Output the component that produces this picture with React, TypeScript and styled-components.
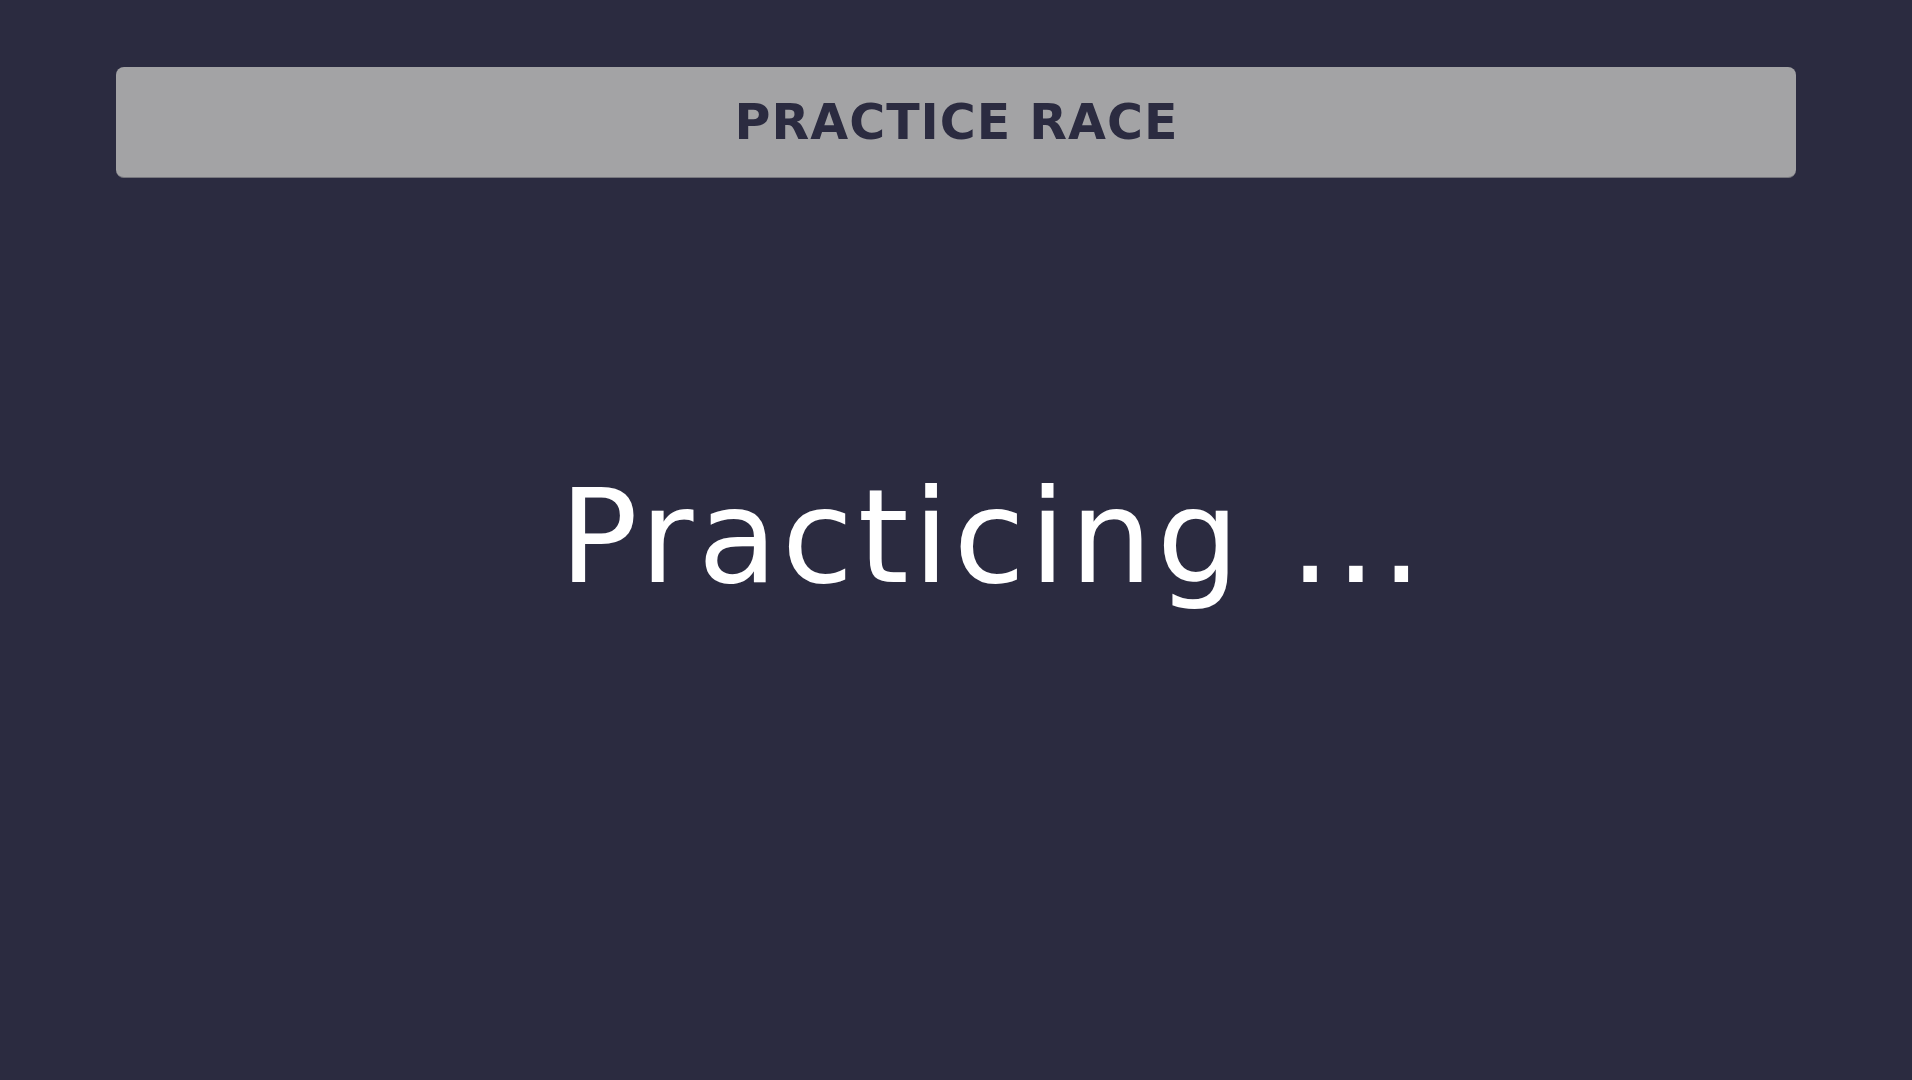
import React from "react";
import styled, { createGlobalStyle } from "styled-components";

const Global = createGlobalStyle`
  html, body { margin: 0; padding: 0; background: #2b2b40; }
  body { font-family: "DejaVu Sans", "Liberation Sans", sans-serif; }
`;

const Page = styled.div`
  display: grid;
  grid-template-columns: 1fr;
  grid-template-rows: 1fr;
  height: 100vh;
  width: 100%;
  background: #2b2b40;
  overflow: hidden;
`;

const Header = styled.header`
  grid-area: 1 / 1;
  align-self: start;
  justify-self: center;
  margin-top: 67px;
  width: 1680px;
  height: 111px;
  box-sizing: border-box;
  background: #a3a3a5;
  border-radius: 8px;
  border-bottom: 1px solid #77777e;
  display: flex;
  align-items: center;
  justify-content: center;
`;

const Title = styled.h1`
  margin: 0;
  padding-left: 1px;
  font-family: "DejaVu Sans", sans-serif;
  font-weight: 700;
  font-size: 49px;
  letter-spacing: 1px;
  color: #2b2b40;
  line-height: 1;
`;

const Main = styled.main`
  grid-area: 1 / 1;
  align-self: center;
  justify-self: center;
  padding-left: 74px;
  padding-bottom: 6px;
`;

const Status = styled.div`
  font-family: "DejaVu Sans", sans-serif;
  font-size: 130px;
  line-height: 1;
  color: #ffffff;
  letter-spacing: 4.4px;
  white-space: nowrap;
`;

export default function App() {
  return (
    <>
      <Global />
      <Page>
        <Header>
          <Title>PRACTICE RACE</Title>
        </Header>
        <Main>
          <Status>Practicing ...</Status>
        </Main>
      </Page>
    </>
  );
}
